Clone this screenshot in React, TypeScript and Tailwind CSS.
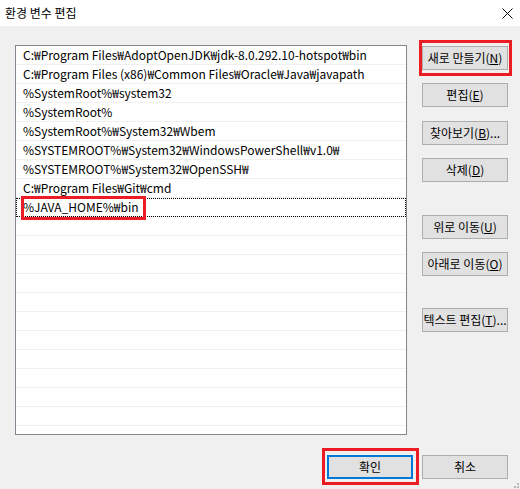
import React from "react";

const FONT = `font-["Noto_Sans_CJK_KR","Noto_Sans",sans-serif]`;

const paths = [
  "C:₩Program Files₩AdoptOpenJDK₩jdk-8.0.292.10-hotspot₩bin",
  "C:₩Program Files (x86)₩Common Files₩Oracle₩Java₩javapath",
  "%SystemRoot%₩system32",
  "%SystemRoot%",
  "%SystemRoot%₩System32₩Wbem",
  "%SYSTEMROOT%₩System32₩WindowsPowerShell₩v1.0₩",
  "%SYSTEMROOT%₩System32₩OpenSSH₩",
  "C:₩Program Files₩Git₩cmd",
  "%JAVA_HOME%₩bin",
];

const Btn = ({
  label,
  mn,
  tail = "",
  className = "",
}: {
  label: string;
  mn: string;
  tail?: string;
  className?: string;
}) => (
  <div
    className={`w-[86px] h-[24px] bg-[#e1e1e1] border border-[#adadad] flex items-center justify-center text-[12px] text-black whitespace-nowrap ${className}`}
  >
    {label}(<span className="underline">{mn}</span>){tail}
  </div>
);

export default function App() {
  const rows = Array.from({ length: 20 }, (_, i) => paths[i] ?? "");

  return (
    <div
      className={`relative w-[520px] h-[489px] bg-[#f0f0f0] flex flex-col overflow-hidden ${FONT}`}
    >
      <div className="h-[26px] bg-white flex items-center justify-between pl-[5px] pr-[7px]">
        <span className="text-[12px] text-black">환경 변수 편집</span>
        <svg width="11" height="11" viewBox="0 0 11 11">
          <path d="M0.5 0.5L10.5 10.5M10.5 0.5L0.5 10.5" stroke="#000" strokeWidth="1" />
        </svg>
      </div>

      <div className="flex pt-[19px] pl-[15px]">
        <div className="w-[392px] h-[390px] border border-[#828790] bg-white overflow-hidden">
          {rows.map((r, i) => (
            <div
              key={i}
              className={`h-[19px] border-b border-[#f0f0f0] flex items-center pl-[7px] text-[12px] text-black whitespace-nowrap ${
                i === 8 ? "outline-1 outline-dotted outline-black -outline-offset-1" : ""
              }`}
            >
              {r}
            </div>
          ))}
        </div>

        <div className="ml-[15px] flex flex-col">
          <Btn label="새로 만들기" mn="N" className="mt-px" />
          <Btn label="편집" mn="E" className="mt-[13px]" />
          <Btn label="찾아보기" mn="B" tail="..." className="mt-[14px]" />
          <Btn label="삭제" mn="D" className="mt-[13px]" />
          <Btn label="위로 이동" mn="U" className="mt-[33px]" />
          <Btn label="아래로 이동" mn="O" className="mt-[13px]" />
          <Btn label="텍스트 편집" mn="T" tail="..." className="mt-[32px]" />
        </div>
      </div>

      <div className="flex justify-end pr-[12px] mt-[20px] gap-[9px]">
        <div className="w-[86px] h-[24px] bg-[#e1e1e1] border-2 border-[#0078d7] flex items-center justify-center text-[12px] text-black">
          확인
        </div>
        <div className="w-[86px] h-[24px] bg-[#e1e1e1] border border-[#adadad] flex items-center justify-center text-[12px] text-black">
          취소
        </div>
      </div>

      {/* annotation boxes */}
      <div className="absolute left-[419px] top-[40px] w-[93px] h-[36px] border-[3px] border-[#ed1c24]" />
      <div className="absolute left-[21px] top-[196px] w-[125px] h-[24px] border-[3px] border-[#ed1c24]" />
      <div className="absolute left-[322px] top-[448px] w-[97px] h-[37px] border-[3px] border-[#ed1c24]" />

      {/* size grip */}
      <svg className="absolute right-0 bottom-0" width="12" height="12" viewBox="0 0 12 12">
        <rect x="9" y="6" width="2" height="2" fill="#b8b8b8" />
        <rect x="6" y="9" width="2" height="2" fill="#b8b8b8" />
        <rect x="9" y="9" width="2" height="2" fill="#b8b8b8" />
      </svg>
    </div>
  );
}
